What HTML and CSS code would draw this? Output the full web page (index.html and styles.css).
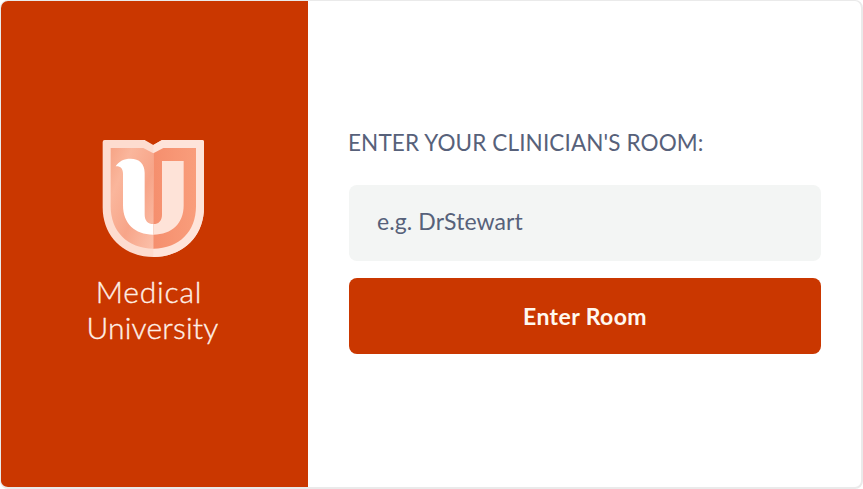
FILE: index.html
```html
<!DOCTYPE html>
<html lang="en">
<head>
<meta charset="utf-8">
<title>Medical University</title>
<link rel="stylesheet" href="styles.css">
</head>
<body>
<main class="card">
  <section class="brand">
    <svg class="crest" viewBox="36 27 306 354" aria-hidden="true">
      <defs>
        <linearGradient id="leftField" x1="0" y1="0" x2="1" y2="1">
          <stop offset="0" stop-color="#f6a486"/>
          <stop offset=".25" stop-color="#fab69c"/>
          <stop offset=".6" stop-color="#f7a589"/>
          <stop offset="1" stop-color="#fbc0aa"/>
        </linearGradient>
        <linearGradient id="rightField" x1="0" y1="0" x2="1" y2="0">
          <stop offset="0" stop-color="#f58f6e"/>
          <stop offset="1" stop-color="#f99d7b"/>
        </linearGradient>
      </defs>
      <path fill="#fddccf" d="M44 30H164L190 45L216 30H336Q342 30 342 36V232C342 320 278 381 190 381S38 320 38 232V36Q38 30 44 30Z"/>
      <path fill="#fee4da" d="M190 45L216 30H336Q342 30 342 36V232C342 320 278 381 190 381Z"/>
      <path fill="url(#leftField)" d="M62 54H160L190 70V356C112 356 62 304 62 229Z"/>
      <path fill="url(#rightField)" d="M190 70L220 54H318V229C318 304 268 356 190 356Z"/>
      <path fill="#fff" d="M77 109C87 93 102 86 122 86C148 86 164 101 164 129V254C164 272 174 282 190 282V314C134 314 99 280 99 226V132C99 115 91 108 77 109Z"/>
      <path fill="#fee3d8" d="M190 282C207 282 216 271 216 254V93H281V226C281 280 246 314 190 314Z"/>
    </svg>
    <h1 class="name"><span class="medical">Medical</span><span class="university">University</span></h1>
  </section>
  <form class="entry">
    <label class="label" for="room">ENTER YOUR CLINICIAN'S ROOM:</label>
    <input class="field" id="room" type="text" placeholder="e.g. DrStewart">
    <button class="submit" type="button">Enter Room</button>
  </form>
</main>
</body>
</html>
```
FILE: styles.css
```css
* { box-sizing: border-box; }
body { margin: 0; background: #fff; font-family: Lato, "Liberation Sans", sans-serif; }
.card {
  display: flex;
  width: 863px;
  height: 489px;
  border: 1px solid #eaeaea;
  border-right-width: 2px;
  border-bottom-width: 2px;
  border-radius: 8px;
  overflow: hidden;
  background: #fff;
}
.brand {
  width: 307px;
  padding: 138px 4px 0 0;
  background: #ca3700;
  display: flex;
  flex-direction: column;
  align-items: center;
}
.crest { display: block; width: 102px; height: 118px; }
.name {
  margin: 16px 0 0;
  color: #fff0e7;
  font-size: 30px;
  line-height: 36px;
  font-weight: 300;
  text-align: center;
  -webkit-text-stroke: .35px #fff0e7;
}
.name span { display: block; white-space: nowrap; }
.medical { margin-right: 7px; letter-spacing: .8px; }
.university { letter-spacing: .2px; }
.entry { flex: 1; padding: 128px 40px 0 41px; }
.label {
  display: block;
  height: 28px;
  margin: 0 0 28px -1px;
  color: #57617a;
  font-size: 22.5px;
  line-height: 28px;
  letter-spacing: .12px;
  white-space: nowrap;
}
.field, .submit {
  display: block;
  width: 472px;
  height: 76px;
  border: 0;
  border-radius: 8px;
  font-family: inherit;
}
.field {
  margin-bottom: 17px;
  padding: 0 28px 5px;
  background: #f3f5f4;
  color: #57617a;
  font-size: 23px;
  letter-spacing: .1px;
}
.field::placeholder { color: #57617a; opacity: 1; }
.submit {
  padding: 0;
  background: #ca3700;
  color: #fff8ef;
  font-size: 23px;
  font-weight: 700;
  letter-spacing: .4px;
}
```
